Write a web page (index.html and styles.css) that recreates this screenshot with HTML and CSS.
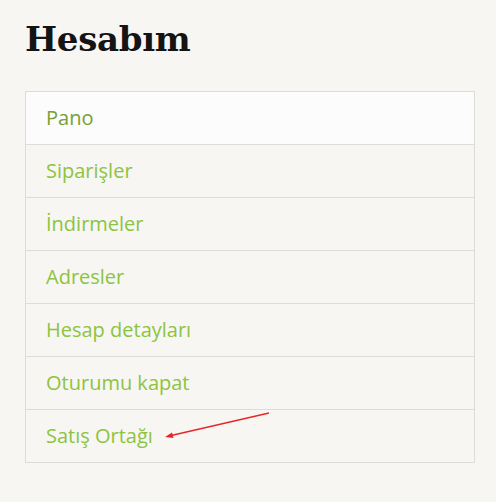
FILE: index.html
```html
<!DOCTYPE html>
<html lang="tr">
<head>
<meta charset="utf-8">
<link rel="stylesheet" href="styles.css">
</head>
<body>
<div class="page">
  <h1 class="title">Hesabım</h1>
  <nav class="menu">
    <a class="item active" href="#">Pano</a>
    <a class="item" href="#">Siparişler</a>
    <a class="item" href="#">İndirmeler</a>
    <a class="item" href="#">Adresler</a>
    <a class="item" href="#">Hesap detayları</a>
    <a class="item" href="#">Oturumu kapat</a>
    <a class="item" href="#">Satış Ortağı</a>
  </nav>
  <svg class="arrow" width="120" height="40" viewBox="0 0 120 40">
    <line x1="114" y1="6" x2="14" y2="29" stroke="#e8262a" stroke-width="1.4"/>
    <polygon points="10,30 17,25.5 18.5,31" fill="#e8262a"/>
  </svg>
</div>
</body>
</html>
```
FILE: styles.css
```css
html, body {
  margin: 0;
  padding: 0;
  background: #f7f6f3;
}
.page {
  position: relative;
  padding: 16px 21px 0 25px;
}
.title {
  margin: 0;
  font-family: "DejaVu Serif", serif;
  font-weight: bold;
  font-size: 34px;
  line-height: 46px;
  color: #141414;
  letter-spacing: -0.3px;
}
.menu {
  margin-top: 29px;
  width: 448px;
  border: 1px solid #dddcda;
  display: flex;
  flex-direction: column;
}
.item {
  display: block;
  height: 52px;
  line-height: 52px;
  padding-left: 20px;
  font-family: "Open Sans", sans-serif;
  font-size: 20px;
  color: #8cc43f;
  text-decoration: none;
  border-top: 1px solid #dddcda;
}
.item:first-child {
  border-top: none;
}
.item.active {
  background: #fcfcfc;
  color: #76a033;
}
.arrow {
  position: absolute;
  left: 155px;
  top: 407px;
}
```
